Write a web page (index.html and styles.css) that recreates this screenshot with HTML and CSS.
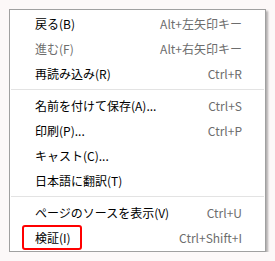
FILE: index.html
```html
<!DOCTYPE html>
<html lang="ja">
<head>
    <meta charset="UTF-8">
    <title>Context Menu</title>
    <link rel="stylesheet" href="styles.css">
</head>
<body>
    <div class="menu">
        <div class="group">
            <div class="item"><span>戻る(B)</span><span class="key">Alt+左矢印キー</span></div>
            <div class="item disabled"><span>進む(F)</span><span class="key">Alt+右矢印キー</span></div>
            <div class="item"><span>再読み込み(R)</span><span class="key">Ctrl+R</span></div>
        </div>
        <div class="sep"></div>
        <div class="group">
            <div class="item"><span>名前を付けて保存(A)...</span><span class="key">Ctrl+S</span></div>
            <div class="item"><span>印刷(P)...</span><span class="key">Ctrl+P</span></div>
            <div class="item"><span>キャスト(C)...</span></div>
            <div class="item"><span>日本語に翻訳(T)</span></div>
        </div>
        <div class="sep"></div>
        <div class="group">
            <div class="item"><span>ページのソースを表示(V)</span><span class="key">Ctrl+U</span></div>
            <div class="item marked"><span>検証(I)</span><span class="key">Ctrl+Shift+I</span></div>
        </div>
    </div>
</body>
</html>
```

FILE: styles.css
```css
body {
    margin: 0;
    background: #fcf8f8;
    font-family: "Noto Sans CJK JP", "Noto Sans", sans-serif;
    font-size: 12px;
    color: #000;
}
.menu {
    margin: 9px 0 0 9px;
    width: 255px;
    padding: 1px 0 1px;
    background: #fff;
    border: 1px solid #a0a0a0;
    box-shadow: 2px 2px 2px rgba(0, 0, 0, 0.3);
}
.item {
    position: relative;
    display: flex;
    justify-content: space-between;
    align-items: center;
    height: 25px;
    padding: 0 23px 0 25px;
}
.item.disabled {
    color: #6d6d6d;
}
.key {
    color: #6d6d6d;
}
.sep {
    height: 1px;
    margin: 3px 1px;
    background: #e3e3e3;
}
.marked::before {
    content: "";
    position: absolute;
    left: 12px;
    top: 0;
    width: 56px;
    height: 21px;
    border: 2px solid #f00;
    border-radius: 3px;
}
```
